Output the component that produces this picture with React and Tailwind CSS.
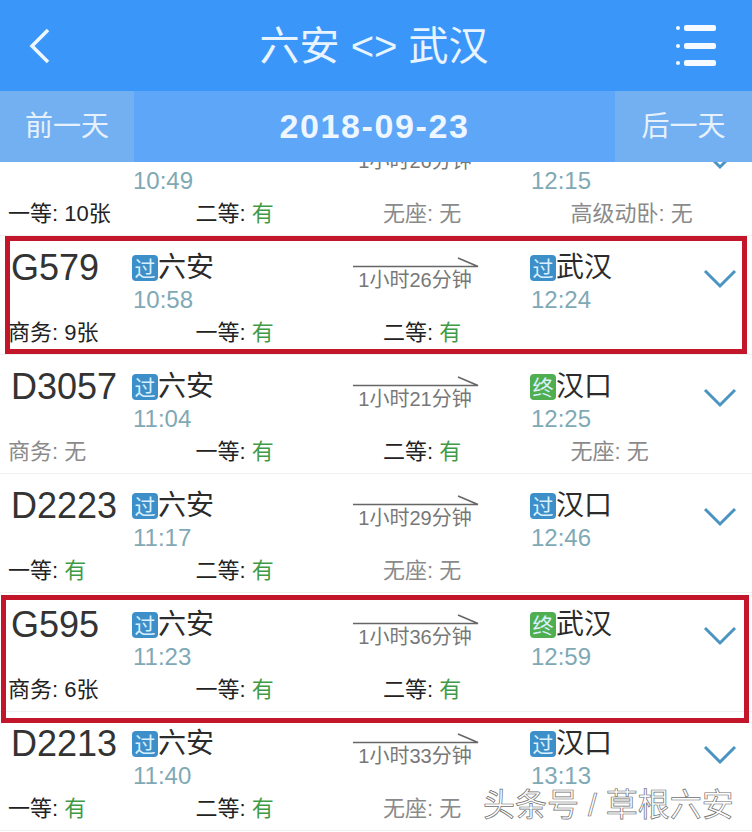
import React from 'react';

const cjk = { fontFamily: '"Liberation Sans", "Noto Sans CJK SC", sans-serif' };

const trains = [
  { no: 'G577', from: '六安', dep: '10:49', dur: '1小时26分钟', tag: '过', to: '武汉', arr: '12:15', seats: [['一等', '10张', 1], ['二等', '有', 1], ['无座', '无', 0], ['高级动卧', '无', 0]] },
  { no: 'G579', from: '六安', dep: '10:58', dur: '1小时26分钟', tag: '过', to: '武汉', arr: '12:24', seats: [['商务', '9张', 1], ['一等', '有', 1], ['二等', '有', 1]], frame: 'left-[5px] right-[5px] top-0 bottom-0' },
  { no: 'D3057', from: '六安', dep: '11:04', dur: '1小时21分钟', tag: '终', to: '汉口', arr: '12:25', seats: [['商务', '无', 0], ['一等', '有', 1], ['二等', '有', 1], ['无座', '无', 0]] },
  { no: 'D2223', from: '六安', dep: '11:17', dur: '1小时29分钟', tag: '过', to: '汉口', arr: '12:46', seats: [['一等', '有', 1], ['二等', '有', 1], ['无座', '无', 0]] },
  { no: 'G595', from: '六安', dep: '11:23', dur: '1小时36分钟', tag: '终', to: '武汉', arr: '12:59', seats: [['商务', '6张', 1], ['一等', '有', 1], ['二等', '有', 1]], frame: 'left-[1px] right-[3px] top-[2px] bottom-[-12px]' },
  { no: 'D2213', from: '六安', dep: '11:40', dur: '1小时33分钟', tag: '过', to: '汉口', arr: '13:13', seats: [['一等', '有', 1], ['二等', '有', 1], ['无座', '无', 0]] },
];

function Tag({ text }) {
  const color = text === '终' ? 'bg-[#4fae4f]' : 'bg-[#3d8fc9]';
  return (
    <span className={`${color} w-[26px] h-[26px] rounded-[4px] flex items-center justify-center text-[21px] leading-none text-[#d8f0ff]`}>
      {text}
    </span>
  );
}

function Stop({ tag, name, time, className }) {
  return (
    <div className={className}>
      <div className="flex items-center h-[32px]">
        {tag}
        <span className="text-[28px] leading-none text-[#2b2b2b]">{name}</span>
      </div>
      <div className="text-[24px] leading-[30px] mt-[1px] ml-[1px] text-[#7fa9b5]">{time}</div>
    </div>
  );
}

function Row({ t }) {
  return (
    <div className="relative h-[119px] shrink-0 bg-white border-b border-[#f0f0f0]">
      <div className="flex h-[80px] pt-[16px]">
        <div className="w-[132px] pl-[11px] text-[36px] leading-[32px] text-[#333333]">{t.no}</div>
        <Stop className="w-[221px]" name={t.from} time={t.dep} tag={<Tag text="过" />} />
        <div className="w-[126px]">
          <svg width="126" height="16" viewBox="0 0 126 16" className="block">
            <path d="M0 14.5H125L105 6" fill="none" stroke="#666666" strokeWidth="1.6" />
          </svg>
          <div className="text-[20px] leading-[24px] pr-[2px] text-center text-[#777777]">{t.dur}</div>
        </div>
        <Stop className="w-[174px] ml-[51px]" name={t.to} time={t.arr} tag={<Tag text={t.tag} />} />
        <svg width="34" height="20" viewBox="0 0 34 20" className="mt-[17px] -ml-[1px] shrink-0">
          <path d="M2 2L17 17L32 2" fill="none" stroke="#4a94c4" strokeWidth="3" />
        </svg>
      </div>
      <div className="grid grid-cols-[repeat(4,187.5px)] pl-[8px] pt-[2px] text-[22px] leading-[30px]">
        {t.seats.map(([label, val, on]) => (
          <div key={label} className={on ? 'text-[#222222]' : 'text-[#8a8a8a]'}>
            {label}: <span className={val === '有' ? 'text-[#3f9a46]' : ''}>{val}</span>
          </div>
        ))}
      </div>
      {t.frame && (
        <div className={`absolute border-[5px] border-[#c4162a] z-10 ${t.frame}`} />
      )}
    </div>
  );
}

export default function App() {
  return (
    <div className="relative w-[752px] h-[832px] overflow-hidden flex flex-col bg-white" style={cjk}>
      {/* Header */}
      <div className="h-[91px] shrink-0 bg-[#3b96f9] flex items-center justify-between pl-[28px] pr-[36px] text-white">
        <svg width="24" height="36" viewBox="0 0 24 36">
          <path d="M20 2L4 18L20 34" fill="none" stroke="#f0f8ff" strokeWidth="3.5" />
        </svg>
        <div className="text-[40px] leading-none text-[#e8f4ff] ml-[20px]">六安 &lt;&gt; 武汉</div>
        <svg width="40" height="41" viewBox="0 0 40 41">
          <g fill="#f4faff">
            <rect x="8" y="0" width="32" height="6" rx="2" />
            <rect x="8" y="18" width="32" height="6" rx="2" />
            <rect x="8" y="35" width="32" height="6" rx="2" />
            <circle cx="2" cy="3" r="2" />
            <circle cx="2" cy="21" r="2" />
            <circle cx="2" cy="38" r="2" />
          </g>
        </svg>
      </div>

      {/* Date bar */}
      <div className="h-[71px] shrink-0 bg-[#5ea6f8] flex items-center text-[#e6f1fb] relative z-20">
        <div className="w-[134px] h-full bg-[#72b0f2] flex items-center justify-center text-[28px]">前一天</div>
        <div className="flex-1 text-center text-[34px] font-bold tracking-[1.6px] text-[#eef6ff]">2018-09-23</div>
        <div className="w-[137px] h-full bg-[#72b0f2] flex items-center justify-center text-[28px]">后一天</div>
      </div>

      {/* Train list */}
      <div className="flex-1 flex flex-col min-h-0">
        <div className="-mt-[45px] flex flex-col">
          {trains.map((t) => (
            <Row key={t.no} t={t} />
          ))}
        </div>
      </div>

      {/* Watermark */}
      <div className="absolute z-30 left-[483px] top-[787px] text-[32px] leading-[36px] text-white/70 [-webkit-text-stroke:0.7px_#6e6e6e]">
        头条号 / 草根六安
      </div>
    </div>
  );
}
